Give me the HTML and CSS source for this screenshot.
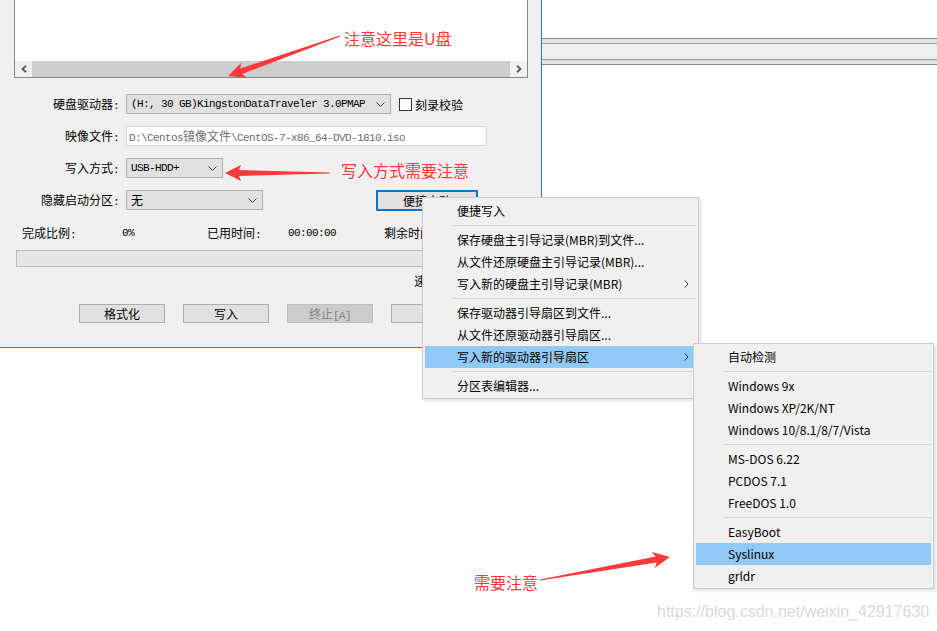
FILE: index.html
```html
<!DOCTYPE html>
<html>
<head>
<meta charset="utf-8">
<title>写入硬盘映像</title>
<link rel="stylesheet" href="styles.css">
</head>
<body>
<div class="screen">
  <div class="win">
    <div class="listbox">
      <div class="list-area"></div>
      <div class="hscroll">
        <span class="sb-btn"><svg width="6" height="8" viewBox="0 0 6 8"><path d="M5 0.8L1.6 4L5 7.2"/></svg></span>
        <span class="sb-thumb"></span>
        <span class="sb-btn"><svg width="6" height="8" viewBox="0 0 6 8"><path d="M1 0.8L4.4 4L1 7.2"/></svg></span>
      </div>
    </div>

    <div class="form">
      <div class="lbl">硬盘驱动器<span class="h">:</span></div>
      <div class="ctl">
        <div class="combo w-drive"><span class="h">(H:, 30 GB)KingstonDataTraveler 3.0PMAP</span><svg class="drop" width="9" height="5" viewBox="0 0 9 5"><path d="M0.5 0.5L4.5 4.5L8.5 0.5"/></svg></div>
        <div class="check"><span class="box"></span>刻录校验</div>
      </div>

      <div class="lbl">映像文件<span class="h">:</span></div>
      <div class="ctl">
        <div class="field"><span class="h">D:\Centos</span>镜像文件<span class="h">\CentOS-7-x86_64-DVD-1810.iso</span></div>
      </div>

      <div class="lbl">写入方式<span class="h">:</span></div>
      <div class="ctl">
        <div class="combo w-mode"><span class="h">USB-HDD+</span><svg class="drop" width="9" height="5" viewBox="0 0 9 5"><path d="M0.5 0.5L4.5 4.5L8.5 0.5"/></svg></div>
      </div>

      <div class="lbl">隐藏启动分区<span class="h">:</span></div>
      <div class="ctl">
        <div class="combo w-hide"><span>无</span><svg class="drop" width="9" height="5" viewBox="0 0 9 5"><path d="M0.5 0.5L4.5 4.5L8.5 0.5"/></svg></div>
        <div class="btn btn-default">便捷启动</div>
      </div>
    </div>

    <div class="stats">
      <span class="s1">完成比例<span class="h">:</span></span>
      <span class="s2 h">0%</span>
      <span class="s3">已用时间<span class="h">:</span></span>
      <span class="s4 h">00:00:00</span>
      <span>剩余时间<span class="h">:</span></span>
    </div>
    <div class="progress"></div>
    <div class="speed">速度<span class="h">:</span></div>

    <div class="actions">
      <div class="btn">格式化</div>
      <div class="btn">写入</div>
      <div class="btn disabled">终止<span class="h">[A]</span></div>
      <div class="btn">返回</div>
    </div>
  </div>

  <div class="side">
    <div class="splitter"></div>
  </div>

  <!-- 右键菜单 -->
  <div class="menu menu-main">
    <div class="mi">便捷写入</div>
    <div class="sep"></div>
    <div class="mi">保存硬盘主引导记录(MBR)到文件...</div>
    <div class="mi">从文件还原硬盘主引导记录(MBR)...</div>
    <div class="mi">写入新的硬盘主引导记录(MBR)<svg class="sub-arrow" width="5" height="8" viewBox="0 0 5 8"><path d="M0.8 0.5L4 4L0.8 7.5"/></svg></div>
    <div class="sep"></div>
    <div class="mi">保存驱动器引导扇区到文件...</div>
    <div class="mi">从文件还原驱动器引导扇区...</div>
    <div class="mi hl">写入新的驱动器引导扇区<svg class="sub-arrow" width="5" height="8" viewBox="0 0 5 8"><path d="M0.8 0.5L4 4L0.8 7.5"/></svg></div>
    <div class="sep"></div>
    <div class="mi">分区表编辑器...</div>
  </div>

  <div class="menu menu-sub">
    <div class="mi">自动检测</div>
    <div class="sep"></div>
    <div class="mi">Windows 9x</div>
    <div class="mi">Windows XP/2K/NT</div>
    <div class="mi">Windows 10/8.1/8/7/Vista</div>
    <div class="sep"></div>
    <div class="mi">MS-DOS 6.22</div>
    <div class="mi">PCDOS 7.1</div>
    <div class="mi">FreeDOS 1.0</div>
    <div class="sep"></div>
    <div class="mi">EasyBoot</div>
    <div class="mi hl">Syslinux</div>
    <div class="mi">grldr</div>
  </div>

  <!-- 标注 -->
  <svg class="marks" width="937" height="631" viewBox="0 0 937 631">
    <polygon points="228,76 241.3,62.8 240.2,68.5 339.8,35.5 340.2,36.5 242.2,74.1 246.7,77.8"/>
    <polygon points="225,173 241,165 239,170 330,172.5 330,173.5 239,176 241,181"/>
    <polygon points="670,557 651.9,552.1 655.7,556.4 540,579.5 540,580.5 656.7,562.4 654.7,567.9"/>
  </svg>
  <div class="note note-1">注意这里是U盘</div>
  <div class="note note-2">写入方式需要注意</div>
  <div class="note note-3">需要注意</div>

  <div class="watermark">https://blog.csdn.net/weixin_42917630</div>
</div>
</body>
</html>
```

FILE: styles.css
```css
* {
    box-sizing: border-box;
}
body {
    margin: 0;
    background: #fff;
    font-family: "Noto Sans CJK SC", sans-serif;
}
.screen {
    position: relative;
    width: 937px;
    height: 631px;
    overflow: hidden;
    display: flex;
    align-items: flex-start;
}

/* 对话框 */
.win {
    width: 542px;
    height: 348px;
    background: #f0f0f0;
    border-right: 1px solid #2b7bd0;
    border-bottom: 1px solid #2b7bd0;
    font-size: 12px;
    color: #000;
}
/* 半角字符 */
.h {
    font-family: "Liberation Mono", monospace;
    font-size: 11px;
    letter-spacing: -0.6px;
}

.listbox {
    margin-left: 14px;
    width: 514px;
    height: 78px;
    border: 1px solid #828790;
    border-top: 0;
    background: #fff;
    display: flex;
    flex-direction: column;
}
.list-area {
    flex: 1;
}
.hscroll {
    height: 16px;
    display: flex;
    background: #f0f0f0;
}
.sb-btn {
    width: 17px;
    display: flex;
    align-items: center;
    justify-content: center;
}
.sb-btn path {
    fill: none;
    stroke: #606060;
    stroke-width: 2;
}
.sb-thumb {
    flex: 1;
    background: #cdcdcd;
}

.form {
    margin-top: 16px;
    display: grid;
    grid-template-columns: 119px auto;
    column-gap: 7px;
    row-gap: 12px;
}
.lbl {
    text-align: right;
    line-height: 20px;
    height: 20px;
}
.ctl {
    display: flex;
    align-items: center;
    height: 20px;
}
.combo {
    height: 20px;
    border: 1px solid #adadad;
    background: #e1e1e1;
    display: flex;
    align-items: center;
    justify-content: space-between;
    padding: 0 5px 0 4px;
    line-height: 18px;
}
.drop path {
    fill: none;
    stroke: #404040;
    stroke-width: 1;
}
.w-drive {
    width: 265px;
}
.w-mode {
    width: 97px;
}
.w-hide {
    width: 137px;
}
.check {
    display: flex;
    align-items: center;
    margin-left: 8px;
}
.check .box {
    width: 13px;
    height: 13px;
    border: 1px solid #333;
    background: #fff;
    margin-right: 3px;
}
.field {
    width: 361px;
    height: 20px;
    border: 1px solid #d9d9d9;
    background: #fff;
    color: #6d6d6d;
    line-height: 18px;
    padding-left: 2px;
}

.btn {
    width: 86px;
    height: 19px;
    border: 1px solid #adadad;
    background: #e1e1e1;
    text-align: center;
    line-height: 17px;
}
.btn.disabled {
    background: #cccccc;
    border-color: #bfbfbf;
    color: #838383;
}
.btn-default {
    width: 102px;
    height: 21px;
    margin-left: 113px;
    border: 2px solid #0078d7;
    line-height: 17px;
}

.stats {
    display: flex;
    height: 16px;
    margin: 15px 0 0 22px;
    line-height: 16px;
}
.stats .s1 {
    width: 100px;
}
.stats .s2 {
    width: 85px;
}
.stats .s3 {
    width: 81px;
}
.stats .s4 {
    width: 96px;
}
.progress {
    margin: 9px 0 0 16px;
    width: 510px;
    height: 17px;
    border: 1px solid #bcbcbc;
    background: #e6e6e6;
}
.speed {
    height: 16px;
    margin: 6px 0 0 414px;
    line-height: 16px;
}
.actions {
    display: flex;
    gap: 18px;
    margin: 15px 0 0 79px;
}

/* 右侧 */
.side {
    flex: 1;
    padding-top: 38px;
}
.splitter {
    height: 27px;
    border-top: 1px solid #7d8b99;
    border-bottom: 1px solid #7d8b99;
    background: linear-gradient(to bottom,
        #e2e2e2 0, #e8e8e8 4px,
        #a0a0a0 4px, #a0a0a0 5px,
        #f0f0f0 5px, #f0f0f0 20px,
        #a0a0a0 20px, #a0a0a0 21px,
        #dcdcdc 21px, #e6e6e6 25px);
}

/* 菜单 */
.menu {
    position: absolute;
    background: #f0f0f0;
    border: 1px solid #cccccc;
    padding: 2px 2px 1px;
    font-size: 12px;
    color: #000;
    box-shadow: 2px 2px 3px rgba(0, 0, 0, 0.12);
}
.menu-main {
    left: 422px;
    top: 197px;
    width: 277px;
}
.menu-sub {
    left: 693px;
    top: 343px;
    width: 241px;
}
.mi {
    position: relative;
    height: 22px;
    line-height: 22px;
    padding-left: 32px;
    white-space: nowrap;
}
.mi.hl {
    background: #91c9f7;
}
.sub-arrow {
    position: absolute;
    right: 7px;
    top: 7px;
}
.sub-arrow path {
    fill: none;
    stroke: #333;
    stroke-width: 1;
}
.sep {
    position: relative;
    height: 7px;
    margin-left: 28px;
}
.sep::before {
    content: "";
    position: absolute;
    left: 0;
    right: 0;
    top: 3px;
    border-top: 1px solid #d7d7d7;
}

/* 标注 */
.marks {
    position: absolute;
    left: 0;
    top: 0;
    pointer-events: none;
}
.marks polygon {
    fill: #f83a3a;
}
.note {
    position: absolute;
    color: #f83a3a;
    font-size: 16px;
    line-height: 20px;
    white-space: nowrap;
}
.note-1 {
    left: 344px;
    top: 28px;
}
.note-2 {
    left: 341px;
    top: 160px;
}
.note-3 {
    left: 474px;
    top: 572px;
}
.watermark {
    position: absolute;
    left: 657px;
    top: 602px;
    font-family: "Liberation Sans", Arial, sans-serif;
    font-size: 16px;
    line-height: 20px;
    color: #d9d9d9;
    white-space: nowrap;
}
```
